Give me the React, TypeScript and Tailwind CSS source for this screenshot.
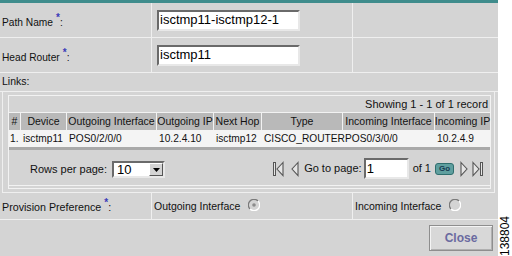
import React from "react";

const Req = () => (
  <>
    <span className="relative -top-[5px] ml-[3px] text-[10px] font-bold text-[#3a3ab8]">*</span>
    <span>:</span>
  </>
);

const FirstIcon = () => (
  <svg width="11" height="16" viewBox="0 0 11 16">
    <rect x="0.5" y="1.5" width="2" height="13" fill="#e6e6e6" stroke="#555" strokeWidth="1" />
    <polygon points="10,1.5 4,8 10,14.5" fill="#e6e6e6" stroke="#555" strokeWidth="1.1" />
  </svg>
);
const PrevIcon = () => (
  <svg width="8" height="16" viewBox="0 0 8 16">
    <polygon points="7,1.5 1,8 7,14.5" fill="#e6e6e6" stroke="#555" strokeWidth="1.1" />
  </svg>
);
const NextIcon = () => (
  <svg width="8" height="16" viewBox="0 0 8 16">
    <polygon points="1,1.5 7,8 1,14.5" fill="#e6e6e6" stroke="#555" strokeWidth="1.1" />
  </svg>
);
const LastIcon = () => (
  <svg width="12" height="16" viewBox="0 0 12 16">
    <polygon points="1,1.5 7,8 1,14.5" fill="#e6e6e6" stroke="#555" strokeWidth="1.1" />
    <rect x="8.5" y="1.5" width="2" height="13" fill="#e6e6e6" stroke="#555" strokeWidth="1" />
  </svg>
);

const Radio = ({ checked }: { checked?: boolean }) => (
  <svg width="12" height="12" viewBox="0 0 12 12">
    <path d="M2 10 A5.5 5.5 0 0 1 10 2" fill="none" stroke="#7a7a7a" strokeWidth="1.3" />
    <path d="M10 2 A5.5 5.5 0 0 1 2 10" fill="none" stroke="#ffffff" strokeWidth="1.3" />
    <circle cx="6" cy="6" r="4.2" fill="#d4d4d4" />
    {checked && <circle cx="6" cy="6" r="1.8" fill="#8c8c8c" />}
  </svg>
);

const cols = "grid grid-cols-[12px_46px_90px_57px_48px_81px_92px_55px]";
const headers = ["#", "Device", "Outgoing Interface", "Outgoing IP", "Next Hop", "Type", "Incoming Interface", "Incoming IP"];
const row = ["1.", "isctmp11", "POS0/2/0/0", "10.2.4.10", "isctmp12", "CISCO_ROUTER", "POS0/3/0/0", "10.2.4.9"];

export default function App() {
  return (
    <div className="flex h-[256px] w-[512px] overflow-hidden bg-white font-['Liberation_Sans',Arial,sans-serif] text-[10.5px] text-[#111]">
      <div className="flex h-[256px] w-[498px] flex-col bg-[#d4d4d4]">
        <div className="h-[3px] bg-[#3f8c8c]" />
        {/* Path name */}
        <div className="flex h-[35px] border-b border-[#efefef]">
          <div className="flex w-[152px] items-center border-r border-[#efefef] pl-[2px] pt-[5px] text-[10.2px]">
            <span>Path Name</span>
            <Req />
          </div>
          <div className="flex w-[201px] items-center border-r border-[#efefef] pl-[5px]">
            <div className="flex h-[21px] w-[143px] items-center border-2 border-t-[#6a6a6a] border-l-[#6a6a6a] border-b-[#e8e8e8] border-r-[#e8e8e8] bg-white pl-[1px] text-[13px] text-black">
              isctmp11-isctmp12-1
            </div>
          </div>
          <div className="flex-1" />
        </div>
        {/* Head router */}
        <div className="flex h-[35px] border-b border-[#efefef]">
          <div className="flex w-[152px] items-center border-r border-[#efefef] pl-[2px] pt-[5px] text-[10.2px]">
            <span>Head Router</span>
            <Req />
          </div>
          <div className="flex w-[201px] items-center border-r border-[#efefef] pl-[5px]">
            <div className="flex h-[21px] w-[143px] items-center border-2 border-t-[#6a6a6a] border-l-[#6a6a6a] border-b-[#e8e8e8] border-r-[#e8e8e8] bg-white pl-[1px] text-[13px] text-black">
              isctmp11
            </div>
          </div>
          <div className="flex-1" />
        </div>
        {/* Links */}
        <div className="flex h-[19px] items-center border-b border-[#efefef] pl-[2px]">Links:</div>
        <div className="ml-[2px] w-[493px] border-x border-b border-[#efefef] pb-[3px] pl-[5px] pr-[3px] pt-[3px]">
          <div className="w-[483px] border border-[#f2f2f2]">
            <div className="flex h-[16px] items-center justify-end pr-[2px] text-[11px]">Showing 1 - 1 of 1 record</div>
            <div className={`${cols} h-[18px] border-t border-[#f2f2f2]`}>
              {headers.map((h, i) => (
                <div
                  key={h}
                  className={`flex items-center justify-center whitespace-nowrap bg-[#b9b9b9] ${i < headers.length - 1 ? "border-r border-[#f2f2f2]" : ""}`}
                >
                  {h}
                </div>
              ))}
            </div>
            <div className={`${cols} h-[17px] bg-[#f4f4f4] text-[10.2px]`}>
              {row.map((c, i) => (
                <div key={i} className={`flex items-center whitespace-nowrap ${i === 0 ? "pl-[1px]" : "pl-[2px]"}`}>
                  {c}
                </div>
              ))}
            </div>
            <div className="h-[3px] bg-[#a9a9a9]" />
            <div className="flex h-[36px] items-center justify-between border-b border-[#f2f2f2] pl-[21px] pr-[6px]">
              <div className="flex items-center gap-[5px] pt-[4px]">
                <span className="text-[11px]">Rows per page:</span>
                <div className="flex h-[17px] w-[53px] items-center justify-between border-2 border-t-[#6a6a6a] border-l-[#6a6a6a] border-b-[#e8e8e8] border-r-[#e8e8e8] bg-white">
                  <span className="pl-[3px] text-[13px] text-black">10</span>
                  <div className="flex h-[13px] w-[14px] items-center justify-center border border-t-white border-l-white border-b-[#555] border-r-[#555] bg-[#d4d4d4]">
                    <svg width="7" height="4" viewBox="0 0 7 4">
                      <polygon points="0,0 7,0 3.5,4" fill="#000" />
                    </svg>
                  </div>
                </div>
              </div>
              <div className="flex items-center pt-[2px]">
                <FirstIcon />
                <span className="ml-[7px]">
                  <PrevIcon />
                </span>
                <span className="ml-[5px] text-[11px]">Go to page:</span>
                <div className="ml-[2px] flex h-[21px] w-[45px] items-center border-2 border-t-[#6a6a6a] border-l-[#6a6a6a] border-b-[#e8e8e8] border-r-[#e8e8e8] bg-white pl-[1px] text-[13px] text-black">
                  1
                </div>
                <span className="ml-[4px] text-[11px]">of 1</span>
                <div className="ml-[4px] flex h-[12px] w-[19px] items-center justify-center rounded-[3px] border border-[#2f6e6e] bg-[#5f9f9f] text-[8px] font-bold text-[#163a52]">
                  Go
                </div>
                <span className="ml-[6px]">
                  <NextIcon />
                </span>
                <span className="ml-[4px]">
                  <LastIcon />
                </span>
              </div>
            </div>
            <div className="h-[2px]" />
          </div>
        </div>
        {/* Provision */}
        <div className="flex h-[27px] border-b border-[#efefef]">
          <div className="flex w-[152px] items-center border-r border-[#efefef] pl-[2px] pt-[3px] text-[10.7px]">
            <span>Provision Preference</span>
            <Req />
          </div>
          <div className="flex w-[201px] items-center border-r border-[#efefef] pl-[2px] pt-[2px]">
            <span>Outgoing Interface</span>
            <span className="ml-[8px] flex -translate-y-[2px]">
              <Radio checked />
            </span>
          </div>
          <div className="flex flex-1 items-center pl-[2px] pt-[2px]">
            <span>Incoming Interface</span>
            <span className="ml-[8px] flex -translate-y-[2px]">
              <Radio />
            </span>
          </div>
        </div>
        <div className="flex flex-1 justify-end pr-[5px] pt-[5px]">
          <div className="flex h-[26px] w-[64px] items-center justify-center border border-[#8e8e8e] bg-[#d8d8d8] shadow-[inset_1px_1px_0_#f4f4f4,inset_-1px_-1px_0_#b0b0b0] text-[12px] font-bold text-[#6a6aa0]">
            Close
          </div>
        </div>
      </div>
      <div className="flex w-[14px] flex-col items-center justify-end bg-white">
        <span className="rotate-180 text-[12px] leading-[12px] text-black [writing-mode:vertical-rl]">138804</span>
      </div>
    </div>
  );
}
